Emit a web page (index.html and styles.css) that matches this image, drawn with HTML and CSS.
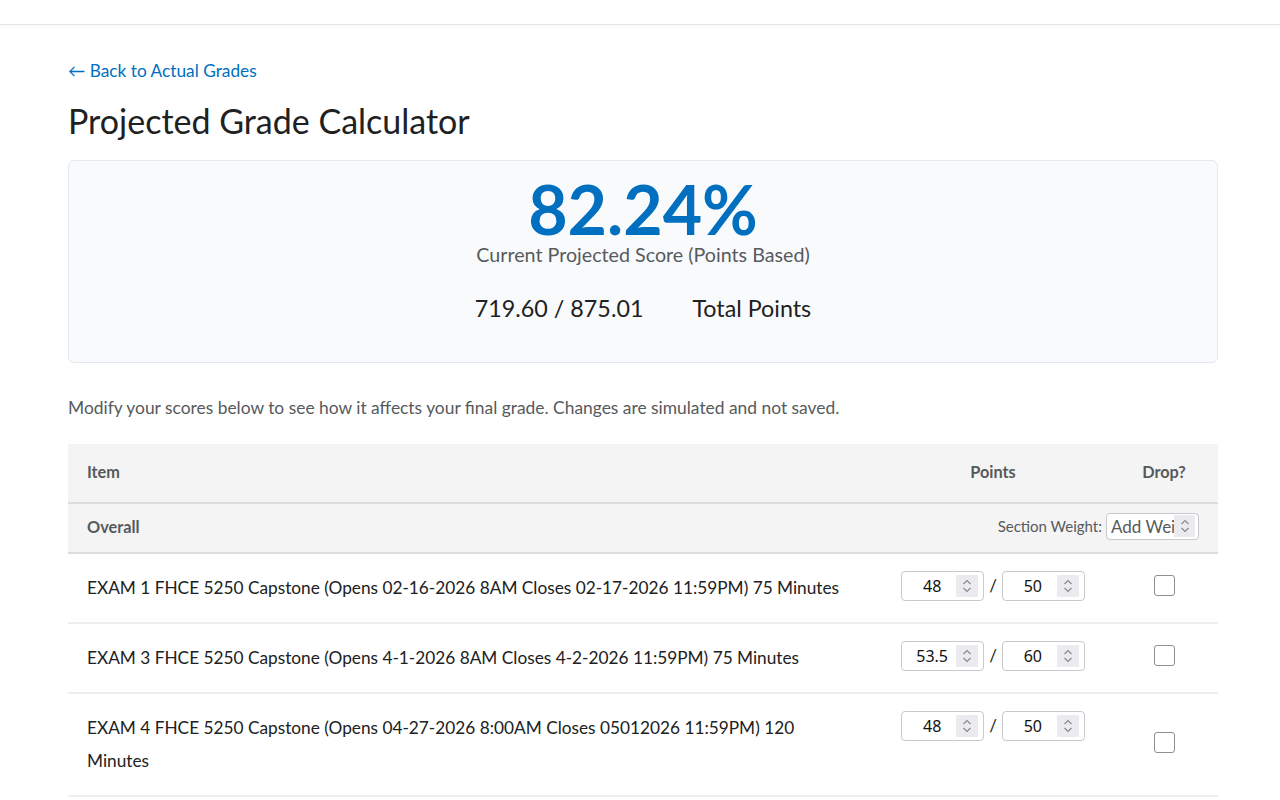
FILE: index.html
```html
<!DOCTYPE html>
<html lang="en">
<head>
<meta charset="utf-8">
<title>Projected Grade Calculator</title>
<link rel="stylesheet" href="styles.css">
</head>
<body>
<div class="topbar"></div>
<main class="page">
  <a class="back" href="#">← Back to Actual Grades</a>
  <h1 class="title">Projected Grade Calculator</h1>

  <section class="summary">
    <div class="pct">82.24%</div>
    <div class="pct-label">Current Projected Score (Points Based)</div>
    <div class="totals">
      <span>719.60 / 875.01</span>
      <span>Total Points</span>
    </div>
  </section>

  <p class="desc">Modify your scores below to see how it affects your final grade. Changes are simulated and not saved.</p>

  <div class="table">
    <div class="row head">
      <div class="c-item">Item</div>
      <div class="c-points">Points</div>
      <div class="c-drop">Drop?</div>
    </div>
    <div class="row overall">
      <div class="c-item">Overall</div>
      <div class="c-weight">
        <span class="weight-label">Section Weight:</span>
        <span class="num num-weight">
          <input class="weight-input" type="text" placeholder="Add Weight" aria-label="Section Weight">
          <span class="spin"><svg viewBox="0 0 12 18" width="12" height="18"><path d="M2.5 7 L6 3.5 L9.5 7 M2.5 11 L6 14.5 L9.5 11" fill="none" stroke="#8a8a8e" stroke-width="1.2"/></svg></span>
        </span>
      </div>
    </div>

    <div class="row item">
      <div class="c-item">EXAM 1 FHCE 5250 Capstone (Opens 02-16-2026 8AM Closes 02-17-2026 11:59PM) 75 Minutes</div>
      <div class="c-points">
        <span class="num"><span class="num-val">48</span><span class="spin"><svg viewBox="0 0 12 18" width="12" height="18"><path d="M2.5 7 L6 3.5 L9.5 7 M2.5 11 L6 14.5 L9.5 11" fill="none" stroke="#8a8a8e" stroke-width="1.2"/></svg></span></span>
        <span class="slash">/</span>
        <span class="num"><span class="num-val">50</span><span class="spin"><svg viewBox="0 0 12 18" width="12" height="18"><path d="M2.5 7 L6 3.5 L9.5 7 M2.5 11 L6 14.5 L9.5 11" fill="none" stroke="#8a8a8e" stroke-width="1.2"/></svg></span></span>
      </div>
      <div class="c-drop"><span class="check"></span></div>
    </div>

    <div class="row item">
      <div class="c-item">EXAM 3 FHCE 5250 Capstone (Opens 4-1-2026 8AM Closes 4-2-2026 11:59PM) 75 Minutes</div>
      <div class="c-points">
        <span class="num"><span class="num-val">53.5</span><span class="spin"><svg viewBox="0 0 12 18" width="12" height="18"><path d="M2.5 7 L6 3.5 L9.5 7 M2.5 11 L6 14.5 L9.5 11" fill="none" stroke="#8a8a8e" stroke-width="1.2"/></svg></span></span>
        <span class="slash">/</span>
        <span class="num"><span class="num-val">60</span><span class="spin"><svg viewBox="0 0 12 18" width="12" height="18"><path d="M2.5 7 L6 3.5 L9.5 7 M2.5 11 L6 14.5 L9.5 11" fill="none" stroke="#8a8a8e" stroke-width="1.2"/></svg></span></span>
      </div>
      <div class="c-drop"><span class="check"></span></div>
    </div>

    <div class="row item">
      <div class="c-item">EXAM 4 FHCE 5250 Capstone (Opens 04-27-2026 8:00AM Closes 05012026 11:59PM) 120 Minutes</div>
      <div class="c-points">
        <span class="num"><span class="num-val">48</span><span class="spin"><svg viewBox="0 0 12 18" width="12" height="18"><path d="M2.5 7 L6 3.5 L9.5 7 M2.5 11 L6 14.5 L9.5 11" fill="none" stroke="#8a8a8e" stroke-width="1.2"/></svg></span></span>
        <span class="slash">/</span>
        <span class="num"><span class="num-val">50</span><span class="spin"><svg viewBox="0 0 12 18" width="12" height="18"><path d="M2.5 7 L6 3.5 L9.5 7 M2.5 11 L6 14.5 L9.5 11" fill="none" stroke="#8a8a8e" stroke-width="1.2"/></svg></span></span>
      </div>
      <div class="c-drop"><span class="check"></span></div>
    </div>
  </div>
</main>
</body>
</html>
```

FILE: styles.css
```css
* { box-sizing: border-box; }
html, body { margin: 0; padding: 0; background: #fff; }
body {
  font-family: Lato, "Noto Sans", "Liberation Sans", sans-serif;
  color: #202122;
}
.topbar {
  height: 25px;
  background: #fff;
  border-bottom: 1px solid #e6e6ea;
  box-shadow: 0 2px 4px rgba(0,0,0,0.03);
}
.page {
  width: 1150px;
  margin: 0 0 0 68px;
  padding-top: 36px;
}
.back {
  display: block;
  font-size: 17.3px;
  line-height: 20px;
  color: #006fbf;
  text-decoration: none;
}
.title {
  margin: 19px 0 0;
  font-size: 34px;
  font-weight: 400;
  line-height: 41px;
  color: #202122;
}
.summary {
  margin-top: 19px;
  background: #f9fafc;
  border: 1px solid #e3e9f1;
  border-radius: 6px;
  padding: 18px 0 40px;
  text-align: center;
}
.pct {
  font-size: 68px;
  font-weight: 700;
  line-height: 60px;
  margin-bottom: 4px;
  color: #006fbf;
}
.pct-label {
  font-size: 19.7px;
  line-height: 24px;
  color: #565a5c;
}
.totals {
  margin-top: 27px;
  font-size: 23.3px;
  line-height: 28px;
  color: #202122;
  display: flex;
  justify-content: center;
  gap: 49px;
}
.desc {
  margin: 33px 0 0;
  font-size: 17.4px;
  line-height: 24px;
  color: #565a5c;
}
.table {
  margin-top: 24px;
}
.row {
  display: grid;
  grid-template-columns: 1fr 234px 108px;
  align-items: center;
}
.row.head {
  background: #f4f4f4;
  border-bottom: 2px solid #dcdcdc;
  height: 60px;
  padding-bottom: 4px;
  font-weight: 700;
  font-size: 16.3px;
  color: #565a5c;
}
.row.overall {
  background: #f4f4f4;
  border-bottom: 2px solid #dcdcdc;
  height: 50px;
  padding-bottom: 4px;
  grid-template-columns: 1fr auto;
  font-size: 16.3px;
  color: #565a5c;
}
.row.overall .c-item { font-weight: 700; }
.c-item { padding-left: 19px; }
.c-points { text-align: center; }
.c-drop { text-align: center; display: flex; justify-content: center; }
.c-weight {
  display: flex;
  align-items: center;
  gap: 4px;
  padding-right: 19px;
}
.weight-label {
  font-size: 15px;
  color: #565a5c;
}
.row.item {
  border-bottom: 2px solid #eeeeee;
  padding: 17px 0 18px;
  font-size: 17.25px;
  line-height: 33px;
  color: #202122;
}
.row.item .c-item { align-self: start; padding-right: 30px; }
.row.item .c-points {
  align-self: start;
  display: flex;
  justify-content: center;
  align-items: center;
  gap: 5px;
}
.num {
  display: inline-flex;
  align-items: center;
  width: 83px;
  height: 30px;
  border: 1px solid #c9c9cc;
  border-radius: 4px;
  background: #fff;
  font-family: "Noto Sans", "Open Sans", sans-serif;
  font-size: 16px;
  color: #111;
  padding-right: 5px;
}
.num-val {
  flex: 1;
  text-align: center;
  line-height: 28px;
  padding-left: 6px;
}
.spin {
  width: 22px;
  height: 22px;
  background: #ebebef;
  display: flex;
  align-items: center;
  justify-content: center;
  flex: none;
}
.num-weight {
  width: 93px;
  height: 27px;
  padding-right: 3px;
}
.weight-input {
  flex: 1;
  min-width: 0;
  width: 60px;
  border: 0;
  outline: 0;
  background: transparent;
  padding: 0 0 0 4px;
  font-family: Lato, "Noto Sans", sans-serif;
  font-size: 17px;
  color: #202122;
}
.weight-input::placeholder { color: #565a5c; opacity: 1; }
.num-weight .spin {
  width: 21px;
  height: 22px;
}
.slash {
  font-size: 17px;
  color: #202122;
  line-height: 30px;
}
.check {
  display: block;
  width: 21px;
  height: 21px;
  border: 1px solid #8f8f94;
  border-radius: 3px;
  background: #fff;
  margin-bottom: 4px;
}
```
